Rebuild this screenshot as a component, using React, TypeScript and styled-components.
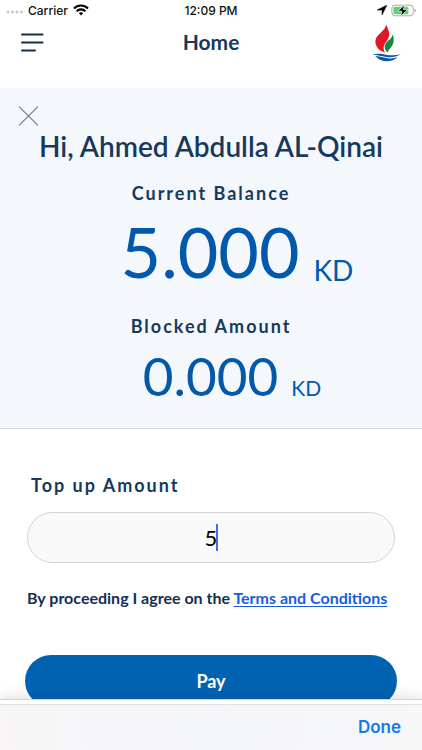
import React, { useState } from "react";
import styled, { createGlobalStyle } from "styled-components";

const navy = "#16395c";
const blue = "#0259ab";

const GlobalStyle = createGlobalStyle`
  *, *::before, *::after { box-sizing: border-box; }
  body { margin: 0; background: #fff; font-family: Lato, "Liberation Sans", sans-serif; color: ${navy}; }
  button, input { font: inherit; }
  h1, h2, p { margin: 0; }
`;

const Screen = styled.div`
  display: flex;
  flex-direction: column;
  height: 100vh;
  overflow: hidden;
`;

const StatusBar = styled.div`
  display: grid;
  grid-template-columns: 1fr auto 1fr;
  align-items: center;
  flex: none;
  height: 20px;
  padding: 0 5px;
  font-family: Inter, "Liberation Sans", sans-serif;
  font-size: 12px;
  font-weight: 500;
  color: #111;
`;

const StatusGroup = styled.div<{ $end?: boolean }>`
  display: flex;
  align-items: center;
  gap: ${(p) => (p.$end ? 4 : 5)}px;
  justify-content: ${(p) => (p.$end ? "flex-end" : "flex-start")};
`;

const NavBar = styled.header`
  display: grid;
  grid-template-columns: 1fr auto 1fr;
  align-items: start;
  flex: none;
  height: 68px;
  padding: 4px 20px 0;
`;

const NavTitle = styled.h1`
  padding-top: 4px;
  font-size: 21px;
  line-height: 28px;
  font-weight: 700;
`;

const IconButton = styled.button`
  display: flex;
  justify-self: start;
  padding: 0;
  border: 0;
  background: none;
  cursor: pointer;
`;

const MenuButton = styled(IconButton)`
  padding-top: 8px;
`;

const Brand = styled.div`
  display: flex;
  justify-self: end;
`;

const Content = styled.main`
  flex: 1;
  min-height: 0;
  overflow-y: auto;
  scrollbar-width: none;
`;

const BalancePanel = styled.section`
  display: flex;
  flex-direction: column;
  padding: 18px 18px 16px;
  background: #f4f8fd;
  border-bottom: 1px solid #d9dbde;
  text-align: center;
`;

const Greeting = styled.h2`
  padding-top: 3px;
  font-size: 28px;
  line-height: 34px;
  font-weight: 600;
`;

const Label = styled.span`
  display: block;
  font-size: 18px;
  line-height: 24px;
  font-weight: 700;
  letter-spacing: 2px;
`;

const Balance = styled.div`
  padding-top: 18px;
`;

const Amount = styled.p<{ $large?: boolean }>`
  display: flex;
  align-items: ${(p) => (p.$large ? "flex-end" : "baseline")};
  justify-content: center;
  gap: ${(p) => (p.$large ? 14 : 13)}px;
  padding: ${(p) => (p.$large ? "4px 0 3px 52px" : "2px 0 0 42px")};
  color: ${blue};
  font-size: ${(p) => (p.$large ? 70 : 53)}px;
  line-height: ${(p) => (p.$large ? 84 : 72)}px;
`;

const Currency = styled.span<{ $large?: boolean }>`
  font-size: ${(p) => (p.$large ? 28 : 21)}px;
  line-height: ${(p) => (p.$large ? 46 : 21)}px;
`;

const Form = styled.form`
  padding: 44px 25px 16px;
`;

const FieldLabel = styled.label`
  display: block;
  padding-left: 6px;
`;

const Field = styled.div`
  position: relative;
  margin: 15px 2px 0;
`;

const AmountInput = styled.input`
  display: block;
  width: 100%;
  height: 51px;
  padding: 0 16px;
  border: 1px solid #d3d3d3;
  border-radius: 26px;
  background: #f9f9f9;
  color: #000;
  font-size: 22px;
  text-align: center;
  caret-color: transparent;
  outline: none;
`;

const Caret = styled.span`
  position: absolute;
  top: 12px;
  left: calc(50% + 5px);
  width: 2px;
  height: 27px;
  background: #4169e8;
`;

const Terms = styled.p`
  padding: 25px 2px 0;
  color: #132f51;
  font-size: 16px;
  line-height: 20px;
  font-weight: 700;
  white-space: nowrap;

  a {
    color: #175de0;
    text-decoration-thickness: 1px;
    text-underline-offset: 2px;
  }
`;

const PayButton = styled.button`
  display: block;
  width: 100%;
  height: 52px;
  margin-top: 47px;
  border: 0;
  border-radius: 26px;
  background: #0063b2;
  color: #fff;
  font-size: 18px;
  font-weight: 700;
  cursor: pointer;
`;

const AccessoryBar = styled.footer`
  position: relative;
  display: flex;
  align-items: center;
  justify-content: flex-end;
  flex: none;
  height: 50px;
  padding: 0 21px;
  border-top: 4px solid #fff;
  background: linear-gradient(90deg, #f7f5f6, #f4f5f9 50%, #f7f7f8);
  box-shadow: 0 -1px 0 #d3d4d6, 0 -2px 14px rgba(0, 0, 0, 0.14), inset 0 1px 0 #e1e1e3;
`;

const DoneButton = styled.button`
  padding: 0;
  border: 0;
  background: none;
  color: #1478f0;
  font-family: Inter, "Liberation Sans", sans-serif;
  font-size: 17px;
  line-height: 22px;
  font-weight: 600;
  cursor: pointer;
`;

const SignalDots = () => (
  <svg width="18" height="12" viewBox="0 0 18 12" fill="#c9c9c9" aria-hidden="true">
    {[3, 7.5, 12, 16.5].map((x) => (
      <circle key={x} cx={x} cy="8" r="1.5" />
    ))}
  </svg>
);

const Wifi = () => (
  <svg width="16" height="12" viewBox="0 0 16 12" fill="none" stroke="#000" strokeWidth="2.1" aria-hidden="true">
    <path d="M1 4.4C5 .5 11 .5 15 4.4" />
    <path d="M3.6 7.2C6.1 4.8 9.9 4.8 12.4 7.2" />
    <path d="M5.8 9.1C7 7.9 9 7.9 10.2 9.1L8 11.5Z" fill="#000" stroke="none" />
  </svg>
);

const LocationArrow = () => (
  <svg width="10" height="10" viewBox="0 0 10 10" aria-hidden="true">
    <path d="M9.8.2.2 5H5.1V9.8Z" fill="#000" stroke="#000" strokeWidth=".6" strokeLinejoin="round" />
  </svg>
);

const Battery = () => (
  <svg width="26" height="13" viewBox="0 0 26 13" aria-hidden="true">
    <rect x=".9" y="1.2" width="21.4" height="10.6" rx="3" fill="#fff" stroke="#aaa" />
    <rect x="2.4" y="2.7" width="15" height="7.6" rx="1.6" fill="#5bd36f" />
    <path d="M23.5 4.7c1.9.5 1.9 3.2 0 3.7Z" fill="#aaa" />
    <path d="M13.7.7 6.9 7.2h4L9.5 12.5l7-6.9h-4.2Z" fill="#000" stroke="#fff" strokeWidth=".7" />
  </svg>
);

const MenuIcon = () => (
  <svg width="24" height="22" viewBox="0 0 24 22" stroke="#132f51" strokeWidth="2" strokeLinecap="round" aria-hidden="true">
    <path d="M2 2.5H22.5M2 10.5H22.5M2 18.5H15" />
  </svg>
);

const CloseIcon = () => (
  <svg width="21" height="20" viewBox="0 0 21 20" stroke="#74797f" strokeWidth="1.1" aria-hidden="true">
    <path d="M1 .7 20 19.3M20 .7 1 19.3" />
  </svg>
);

const FlameLogo = () => (
  <svg width="30" height="38" viewBox="0 0 30 38" role="img" aria-label="Company logo">
    <path d="M14.4.4C15.2 4 17.4 6.5 17.2 11c-.2 5-5.5 8-5.6 13 0 2.1.6 3.3 1.4 4.4C7.4 27.1 3.1 22.8 3.4 17 3.8 10 12.9 7.6 14.4.4Z" fill="#df1826" />
    <path d="M20.6 10.3C22 13.2 22.4 17.8 20.3 21.4 18.4 24.6 16.2 25.5 15.7 28.4 11.8 25.7 12.1 21 14.8 18.1 17.3 15.4 20.1 14.5 20.6 10.3Z" fill="#128b3d" />
    <path d="M.2 30.4C6 29.2 10 29.9 15 30.9 20 31.8 24.3 31 29 30.2 24.5 32.7 19.3 33.8 14.3 32.9 9.5 32 5.3 31 .2 30.4Z" fill="#0b58a7" />
    <path d="M3.2 32C9 32.2 13.6 34.6 18.2 34.4 21.2 34.3 23.5 33.7 25.7 32.7 20.5 38.8 9 38.9 3.2 32Z" fill="#0b58a7" />
  </svg>
);

export default function App() {
  const [amount, setAmount] = useState("5");

  return (
    <>
      <GlobalStyle />
      <Screen>
        <StatusBar>
          <StatusGroup>
            <SignalDots />
            <span>Carrier</span>
            <Wifi />
          </StatusGroup>
          <span>12:09 PM</span>
          <StatusGroup $end>
            <LocationArrow />
            <Battery />
          </StatusGroup>
        </StatusBar>
        <NavBar>
          <MenuButton type="button" aria-label="Menu">
            <MenuIcon />
          </MenuButton>
          <NavTitle>Home</NavTitle>
          <Brand>
            <FlameLogo />
          </Brand>
        </NavBar>
        <Content>
          <BalancePanel>
            <IconButton type="button" aria-label="Close">
              <CloseIcon />
            </IconButton>
            <Greeting>Hi, Ahmed Abdulla AL-Qinai</Greeting>
            <Balance>
              <Label>Current Balance</Label>
              <Amount $large>
                5.000 <Currency $large>KD</Currency>
              </Amount>
            </Balance>
            <Balance>
              <Label>Blocked Amount</Label>
              <Amount>
                0.000 <Currency>KD</Currency>
              </Amount>
            </Balance>
          </BalancePanel>
          <Form onSubmit={(e) => e.preventDefault()}>
            <FieldLabel htmlFor="amount">
              <Label>Top up Amount</Label>
            </FieldLabel>
            <Field>
              <AmountInput
                id="amount"
                inputMode="decimal"
                value={amount}
                onChange={(e) => setAmount(e.target.value)}
              />
              <Caret />
            </Field>
            <Terms>
              By proceeding I agree on the <a href="#terms">Terms and Conditions</a>
            </Terms>
            <PayButton type="submit">Pay</PayButton>
          </Form>
        </Content>
        <AccessoryBar>
          <DoneButton type="button">Done</DoneButton>
        </AccessoryBar>
      </Screen>
    </>
  );
}
